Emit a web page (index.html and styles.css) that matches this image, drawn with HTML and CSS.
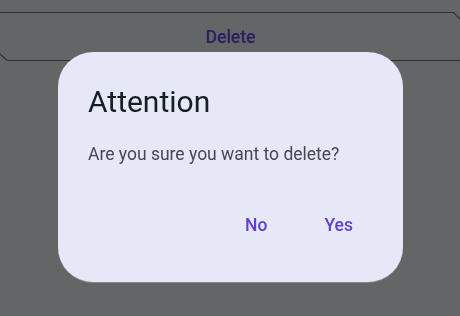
FILE: index.html
```html
<!DOCTYPE html>
<html>
<head>
<meta charset="utf-8">
<link rel="stylesheet" href="styles.css">
</head>
<body>
  <main class="screen">
    <div class="cut-button">
      <svg class="cut-outline" viewBox="0 0 460 50" width="460" height="50" aria-hidden="true">
        <path d="M-2 0.5 H453.5 L471 18" fill="none" stroke="#2b2e2f" stroke-width="1.2"/>
        <path d="M-12 31 L7 48.5 H462" fill="none" stroke="#2b2e2f" stroke-width="1.2"/>
      </svg>
      <span class="cut-label">Delete</span>
    </div>
  </main>

  <div class="dialog" role="dialog">
    <h1 class="dialog-title">Attention</h1>
    <p class="dialog-text">Are you sure you want to delete?</p>
    <div class="dialog-actions">
      <button class="text-btn">No</button>
      <button class="text-btn">Yes</button>
    </div>
  </div>
</body>
</html>
```

FILE: styles.css
```css
html, body {
  margin: 0;
  padding: 0;
  width: 460px;
  height: 316px;
  overflow: hidden;
  background: #636666;
  font-family: Roboto, "Noto Sans", sans-serif;
}

.screen {
  padding-top: 12px;
}

.cut-button {
  display: grid;
  height: 50px;
}

.cut-outline,
.cut-label {
  grid-area: 1 / 1;
}

.cut-outline {
  display: block;
  overflow: visible;
}

.cut-label {
  justify-self: center;
  margin-top: 13px;
  line-height: 25px;
  height: 25px;
  font-size: 17.5px;
  font-weight: 500;
  color: #2d1c62;
  padding-left: 1px;
}

.dialog {
  position: fixed;
  left: 58px;
  top: 52px;
  width: 345px;
  height: 230px;
  box-sizing: border-box;
  padding: 30px 30px 0 30px;
  background: #e6e8f8;
  border-radius: 35px;
  display: flex;
  flex-direction: column;
  box-shadow: 0 1px 0 rgba(170, 173, 180, 0.5);
}

.dialog-title {
  margin: 0 0 20px 0;
  font-size: 30px;
  line-height: 40px;
  font-weight: 400;
  color: #122024;
}

.dialog-text {
  margin: 0 0 30px 0;
  font-size: 17.5px;
  line-height: 25px;
  color: #45484f;
}

.dialog-actions {
  display: flex;
  justify-content: flex-end;
  gap: 10px;
  margin-top: 3px;
  margin-right: -2px;
}

.text-btn {
  min-width: 72.5px;
  height: 50px;
  padding: 0 15px;
  border: none;
  background: transparent;
  border-radius: 25px;
  font-family: Roboto, "Noto Sans", sans-serif;
  font-size: 17.5px;
  font-weight: 500;
  color: #5f3fcb;
}
```
